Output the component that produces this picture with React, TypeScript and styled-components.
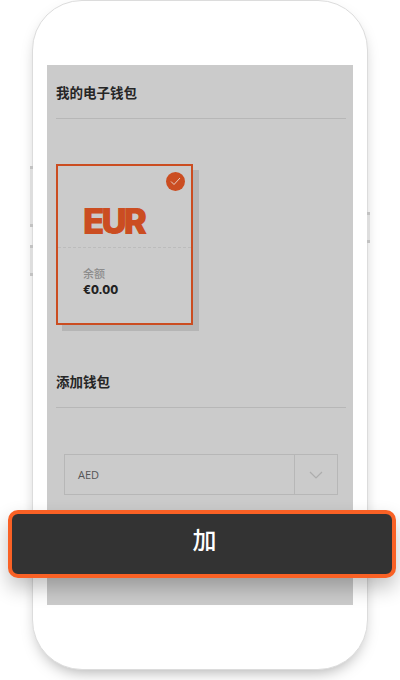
import React from 'react';
import styled, { createGlobalStyle } from 'styled-components';

const GlobalStyle = createGlobalStyle`
  html, body {
    margin: 0;
    padding: 0;
    background: #fff;
    overflow: hidden;
  }
  body {
    font-family: 'Open Sans', 'Noto Sans CJK SC', sans-serif;
  }
`;

const Page = styled.div`
  position: relative;
  width: 400px;
  height: 680px;
  overflow: hidden;
  display: flex;
  justify-content: center;
  align-items: flex-start;
`;

const Phone = styled.div`
  position: relative;
  box-sizing: border-box;
  width: 336px;
  height: 670px;
  padding: 64px 14px 0;
  background: #fff;
  border: 1px solid #dcdcdc;
  border-radius: 50px;
  box-shadow: 0 7px 16px -6px rgba(0, 0, 0, 0.36);
`;

const SideKey = styled.span<{ $side: 'left' | 'right'; $top: number; $height: number }>`
  position: absolute;
  top: ${(p) => p.$top}px;
  ${(p) => p.$side}: -3px;
  width: 3px;
  height: ${(p) => p.$height}px;
  box-sizing: border-box;
  background: #dedede;
  border-top: 3px solid #c2c2c2;
  border-bottom: 3px solid #c2c2c2;
`;

const Screen = styled.div`
  box-sizing: border-box;
  width: 306px;
  height: 540px;
  padding: 0 7px 0 9px;
  background: #cbcbcb;
`;

const SectionHeader = styled.div`
  height: 54px;
  box-sizing: border-box;
  padding-top: 18px;
  border-bottom: 1px solid #b7b7b7;
`;

const Title = styled.h2`
  margin: 0;
  font-family: 'Noto Sans CJK SC', sans-serif;
  font-size: 13.5px;
  line-height: 19px;
  font-weight: 700;
  color: #262626;
`;

const Wallets = styled.div`
  padding-top: 45px;
  height: 235px;
  box-sizing: border-box;
`;

const WalletCard = styled.div`
  position: relative;
  box-sizing: border-box;
  width: 137px;
  height: 161px;
  border: 2px solid #cb4d21;
  box-shadow: 6px 6px 0 #b5b5b5;
`;

const CheckBadge = styled.span`
  position: absolute;
  top: 6px;
  right: 6px;
  width: 19px;
  height: 19px;
  border-radius: 50%;
  background: #cb4d21;
  display: flex;
  align-items: center;
  justify-content: center;
`;

const CardTop = styled.div`
  box-sizing: border-box;
  height: 82px;
  padding: 37px 0 0 25px;
  border-bottom: 1px dashed #bcbcbc;
`;

const Currency = styled.div`
  font-family: 'Inter', sans-serif;
  font-size: 35px;
  line-height: 36px;
  font-weight: 900;
  letter-spacing: -3px;
  color: #cb4d21;
`;

const CardBody = styled.div`
  padding: 17px 0 0 25px;
`;

const BalanceLabel = styled.div`
  font-family: 'Noto Sans CJK SC', sans-serif;
  font-size: 11px;
  line-height: 16px;
  font-weight: 500;
  color: #8c8c8c;
`;

const BalanceValue = styled.div`
  margin-top: 1px;
  font-family: 'Inter', sans-serif;
  font-size: 11.5px;
  line-height: 17px;
  font-weight: 800;
  color: #222;
`;

const SelectRow = styled.div`
  display: flex;
  box-sizing: border-box;
  width: 274px;
  height: 41px;
  margin: 46px 0 0 8px;
  border: 1px solid #b7b7b7;
`;

const SelectValue = styled.div`
  flex: 1;
  padding-left: 13px;
  display: flex;
  align-items: center;
  font-size: 11px;
  color: #555;
`;

const SelectArrow = styled.div`
  width: 42px;
  border-left: 1px solid #b7b7b7;
  display: flex;
  align-items: center;
  justify-content: center;
`;

const AddButton = styled.button`
  position: absolute;
  left: 8px;
  top: 510px;
  box-sizing: border-box;
  width: 388px;
  height: 68px;
  padding: 0 0 12px 5px;
  background: #333;
  border: 4px solid #f96125;
  border-radius: 10px;
  box-shadow: 0 10px 20px rgba(0, 0, 0, 0.24);
  color: #fff;
  font-family: 'Noto Sans CJK SC', sans-serif;
  font-size: 24px;
  font-weight: 500;
`;

export default function App() {
  return (
    <Page>
      <GlobalStyle />
      <Phone>
        <SideKey $side="left" $top={165} $height={61} />
        <SideKey $side="left" $top={244} $height={31} />
        <SideKey $side="right" $top={211} $height={31} />
        <Screen>
          <SectionHeader>
            <Title>我的电子钱包</Title>
          </SectionHeader>
          <Wallets>
            <WalletCard>
              <CheckBadge>
                <svg width="11" height="9" viewBox="0 0 11 9" fill="none">
                  <path d="M1 4.5 L4 7.5 L10 1" stroke="#e8cfc5" strokeWidth="1" />
                </svg>
              </CheckBadge>
              <CardTop>
                <Currency>EUR</Currency>
              </CardTop>
              <CardBody>
                <BalanceLabel>余额</BalanceLabel>
                <BalanceValue>€0.00</BalanceValue>
              </CardBody>
            </WalletCard>
          </Wallets>
          <SectionHeader>
            <Title>添加钱包</Title>
          </SectionHeader>
          <SelectRow>
            <SelectValue>AED</SelectValue>
            <SelectArrow>
              <svg width="14" height="8" viewBox="0 0 14 8" fill="none">
                <path d="M1 1 L7 7 L13 1" stroke="#adadad" strokeWidth="1.2" />
              </svg>
            </SelectArrow>
          </SelectRow>
        </Screen>
      </Phone>
      <AddButton>加</AddButton>
    </Page>
  );
}
